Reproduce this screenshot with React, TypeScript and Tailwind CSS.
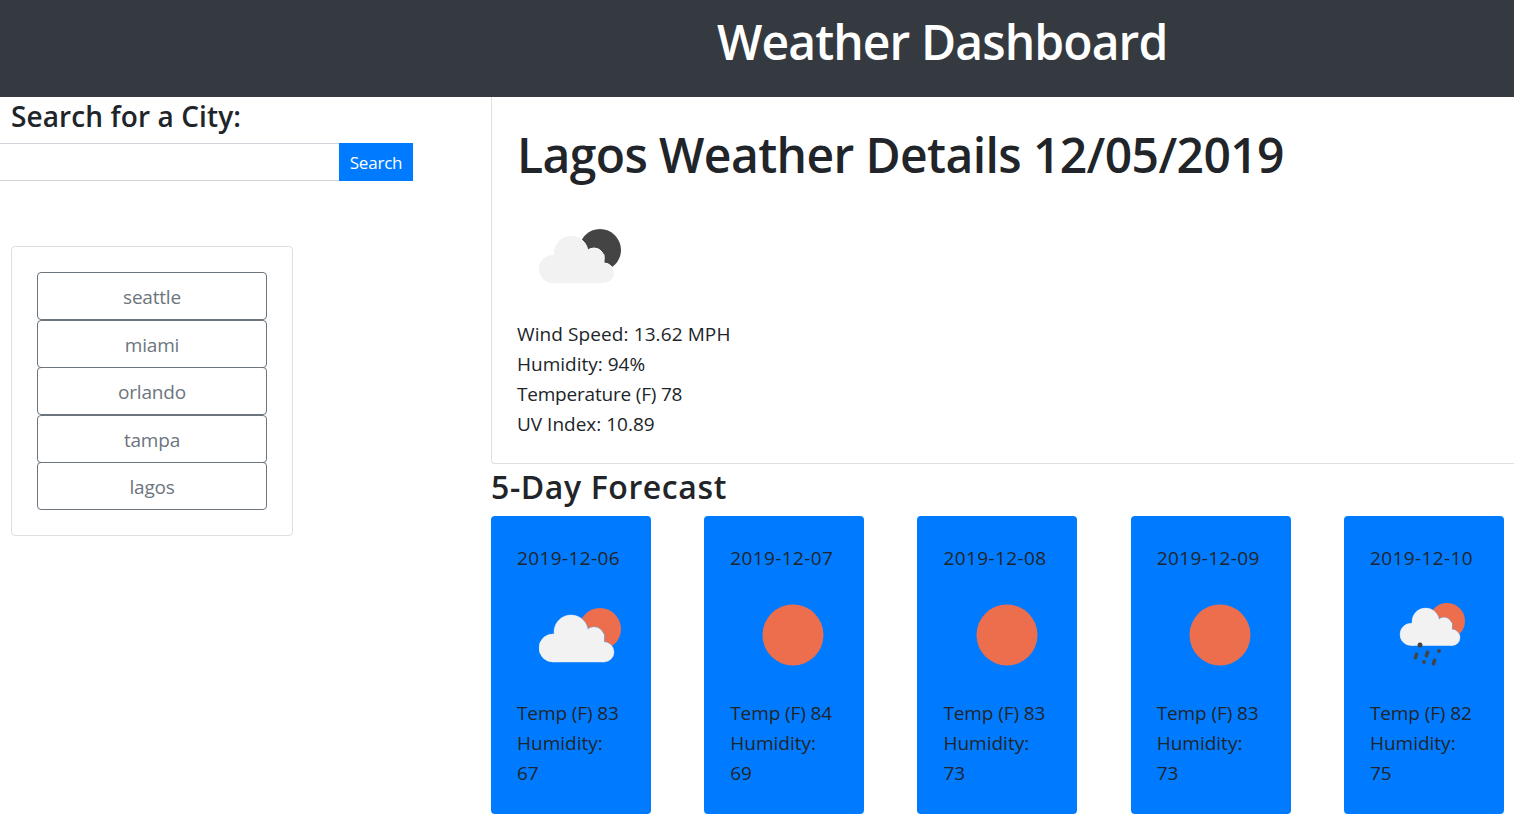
const font = { fontFamily: '"Open Sans", "Noto Sans", sans-serif' };

// cloud built out of lobes, drawn twice so the halo only shows on the outside
function Cloud({ halo }: { halo: string }) {
  const lobes = (
    <>
      <circle cx="14" cy="44" r="14" />
      <circle cx="32" cy="28" r="17" />
      <circle cx="55" cy="33" r="10" />
      <circle cx="65" cy="48" r="10" />
      <rect x="14" y="30" width="51" height="28" />
    </>
  );
  return (
    <>
      <g fill={halo} stroke={halo} strokeWidth="1">{lobes}</g>
      <g fill="#f2f2f2">{lobes}</g>
    </>
  );
}

function Dash({ x, y }: { x: number; y: number }) {
  return <rect x={x - 1.75} y={y - 3.5} width="3.5" height="7" rx="1.5" transform={`rotate(18 ${x} ${y})`} />;
}

function WeatherIcon({ kind }: { kind: "night" | "cloudy" | "sun" | "rain" }) {
  if (kind === "sun") {
    return (
      <svg className="ml-[32.2px]" width="62" height="62" viewBox="0 0 62 62">
        <circle cx="31" cy="31" r="30.500" fill="#ed6e4c" />
      </svg>
    );
  }
  if (kind === "rain") {
    return (
      <svg className="ml-[30px] overflow-visible" width="66" height="62" viewBox="0 0 66 62">
        <circle cx="47" cy="17" r="18" fill="#ed6e4c" />
        <g transform="translate(0 -4.800) scale(0.8)">
          <Cloud halo="#6aaef7" />
        </g>
        <g fill="#444444">
          <circle cx="20" cy="41" r="2.500" />
          <Dash x={16} y={52} />
          <Dash x={27} y={50} />
          <circle cx="39" cy="47" r="2" />
          <circle cx="24" cy="58" r="2" />
          <Dash x={34} y={58} />
        </g>
      </svg>
    );
  }
  const night = kind === "night";
  return (
    <svg className="ml-[22px]" width="84" height="62" viewBox="0 0 84 62">
      <circle cx="61" cy="25" r="21" fill={night ? "#444444" : "#ed6e4c"} />
      <Cloud halo={night ? "#ffffff" : "#6aaef7"} />
    </svg>
  );
}

const cities = ["seattle", "miami", "orlando", "tampa", "lagos"];

const days = [
  { date: "2019-12-06", icon: "cloudy", temp: 83, hum: 67 },
  { date: "2019-12-07", icon: "sun", temp: 84, hum: 69 },
  { date: "2019-12-08", icon: "sun", temp: 83, hum: 73 },
  { date: "2019-12-09", icon: "sun", temp: 83, hum: 73 },
  { date: "2019-12-10", icon: "rain", temp: 82, hum: 75 },
] as const;

export default function App() {
  return (
    <div style={font} className="h-[819px] overflow-hidden bg-white text-[#212529]">
      <header className="h-[97px] bg-[#343a40] pl-[717px] pt-[13px]">
        <h1 className="text-[48px] leading-[58px] font-semibold tracking-[-0.9px] text-white">Weather Dashboard</h1>
      </header>
      <div className="flex">
        <aside className="w-[491px] shrink-0">
          <h4 className="pl-[11px] pt-[3px] text-[28px] leading-[32px] font-semibold tracking-[0.1px]">Search for a City:</h4>
          <div className="mt-[11px] flex">
            <input className="h-[38px] w-[339px] border-y border-[#ced4da] outline-none" />
            <button className="h-[38px] w-[74px] bg-[#007bff] pt-[1px] text-[17px] tracking-[-0.2px] text-white">Search</button>
          </div>
          <div className="mt-[65px] ml-[11px] w-[282px] rounded border border-[#dfdfdf] px-[25px] pt-[25.25px] pb-[24.75px]">
            {cities.map((c) => (
              <button
                key={c}
                className="-mb-[0.5px] block h-[48px] w-[230px] rounded border border-[#6c757d] pt-[2px] text-[19px] tracking-[-0.2px] text-[#6c757d]"
              >
                {c}
              </button>
            ))}
          </div>
        </aside>
        <main className="min-w-0 flex-1">
          <section className="h-[367px] rounded-bl border-b border-l border-[#dfdfdf] pl-[25px] pt-[29px]">
            <h2 className="text-[48px] leading-[58px] font-semibold tracking-[-0.6px]">Lagos Weather Details 12/05/2019</h2>
            <div className="mt-[41px] h-[62px]">
              <WeatherIcon kind="night" />
            </div>
            <div className="mt-[32px] text-[19px] leading-[30px]">
              <p className="tracking-[0.1px]">Wind Speed: 13.62 MPH</p>
              <p>Humidity: 94%</p>
              <p className="tracking-[-0.2px]">Temperature (F) 78</p>
              <p>UV Index: 10.89</p>
            </div>
          </section>
          <h3 className="mt-[3px] text-[32px] leading-[39px] font-semibold tracking-[0.6px]">5-Day Forecast</h3>
          <div className="mt-[10px] flex w-[1012.9px] justify-between">
            {days.map((d) => (
              <div key={d.date} className="h-[298px] w-[160px] rounded bg-[#007bff] px-[26px] pt-[27px] text-[19px] leading-[30px]">
                <p className="tracking-[0.4px]">{d.date}</p>
                <div className="mt-[31px] flex h-[62px]">
                  <WeatherIcon kind={d.icon} />
                </div>
                <div className="mt-[32px]">
                  <p className="tracking-[-0.1px]">Temp (F) {d.temp}</p>
                  <p>Humidity:</p>
                  <p>{d.hum}</p>
                </div>
              </div>
            ))}
          </div>
        </main>
      </div>
    </div>
  );
}
